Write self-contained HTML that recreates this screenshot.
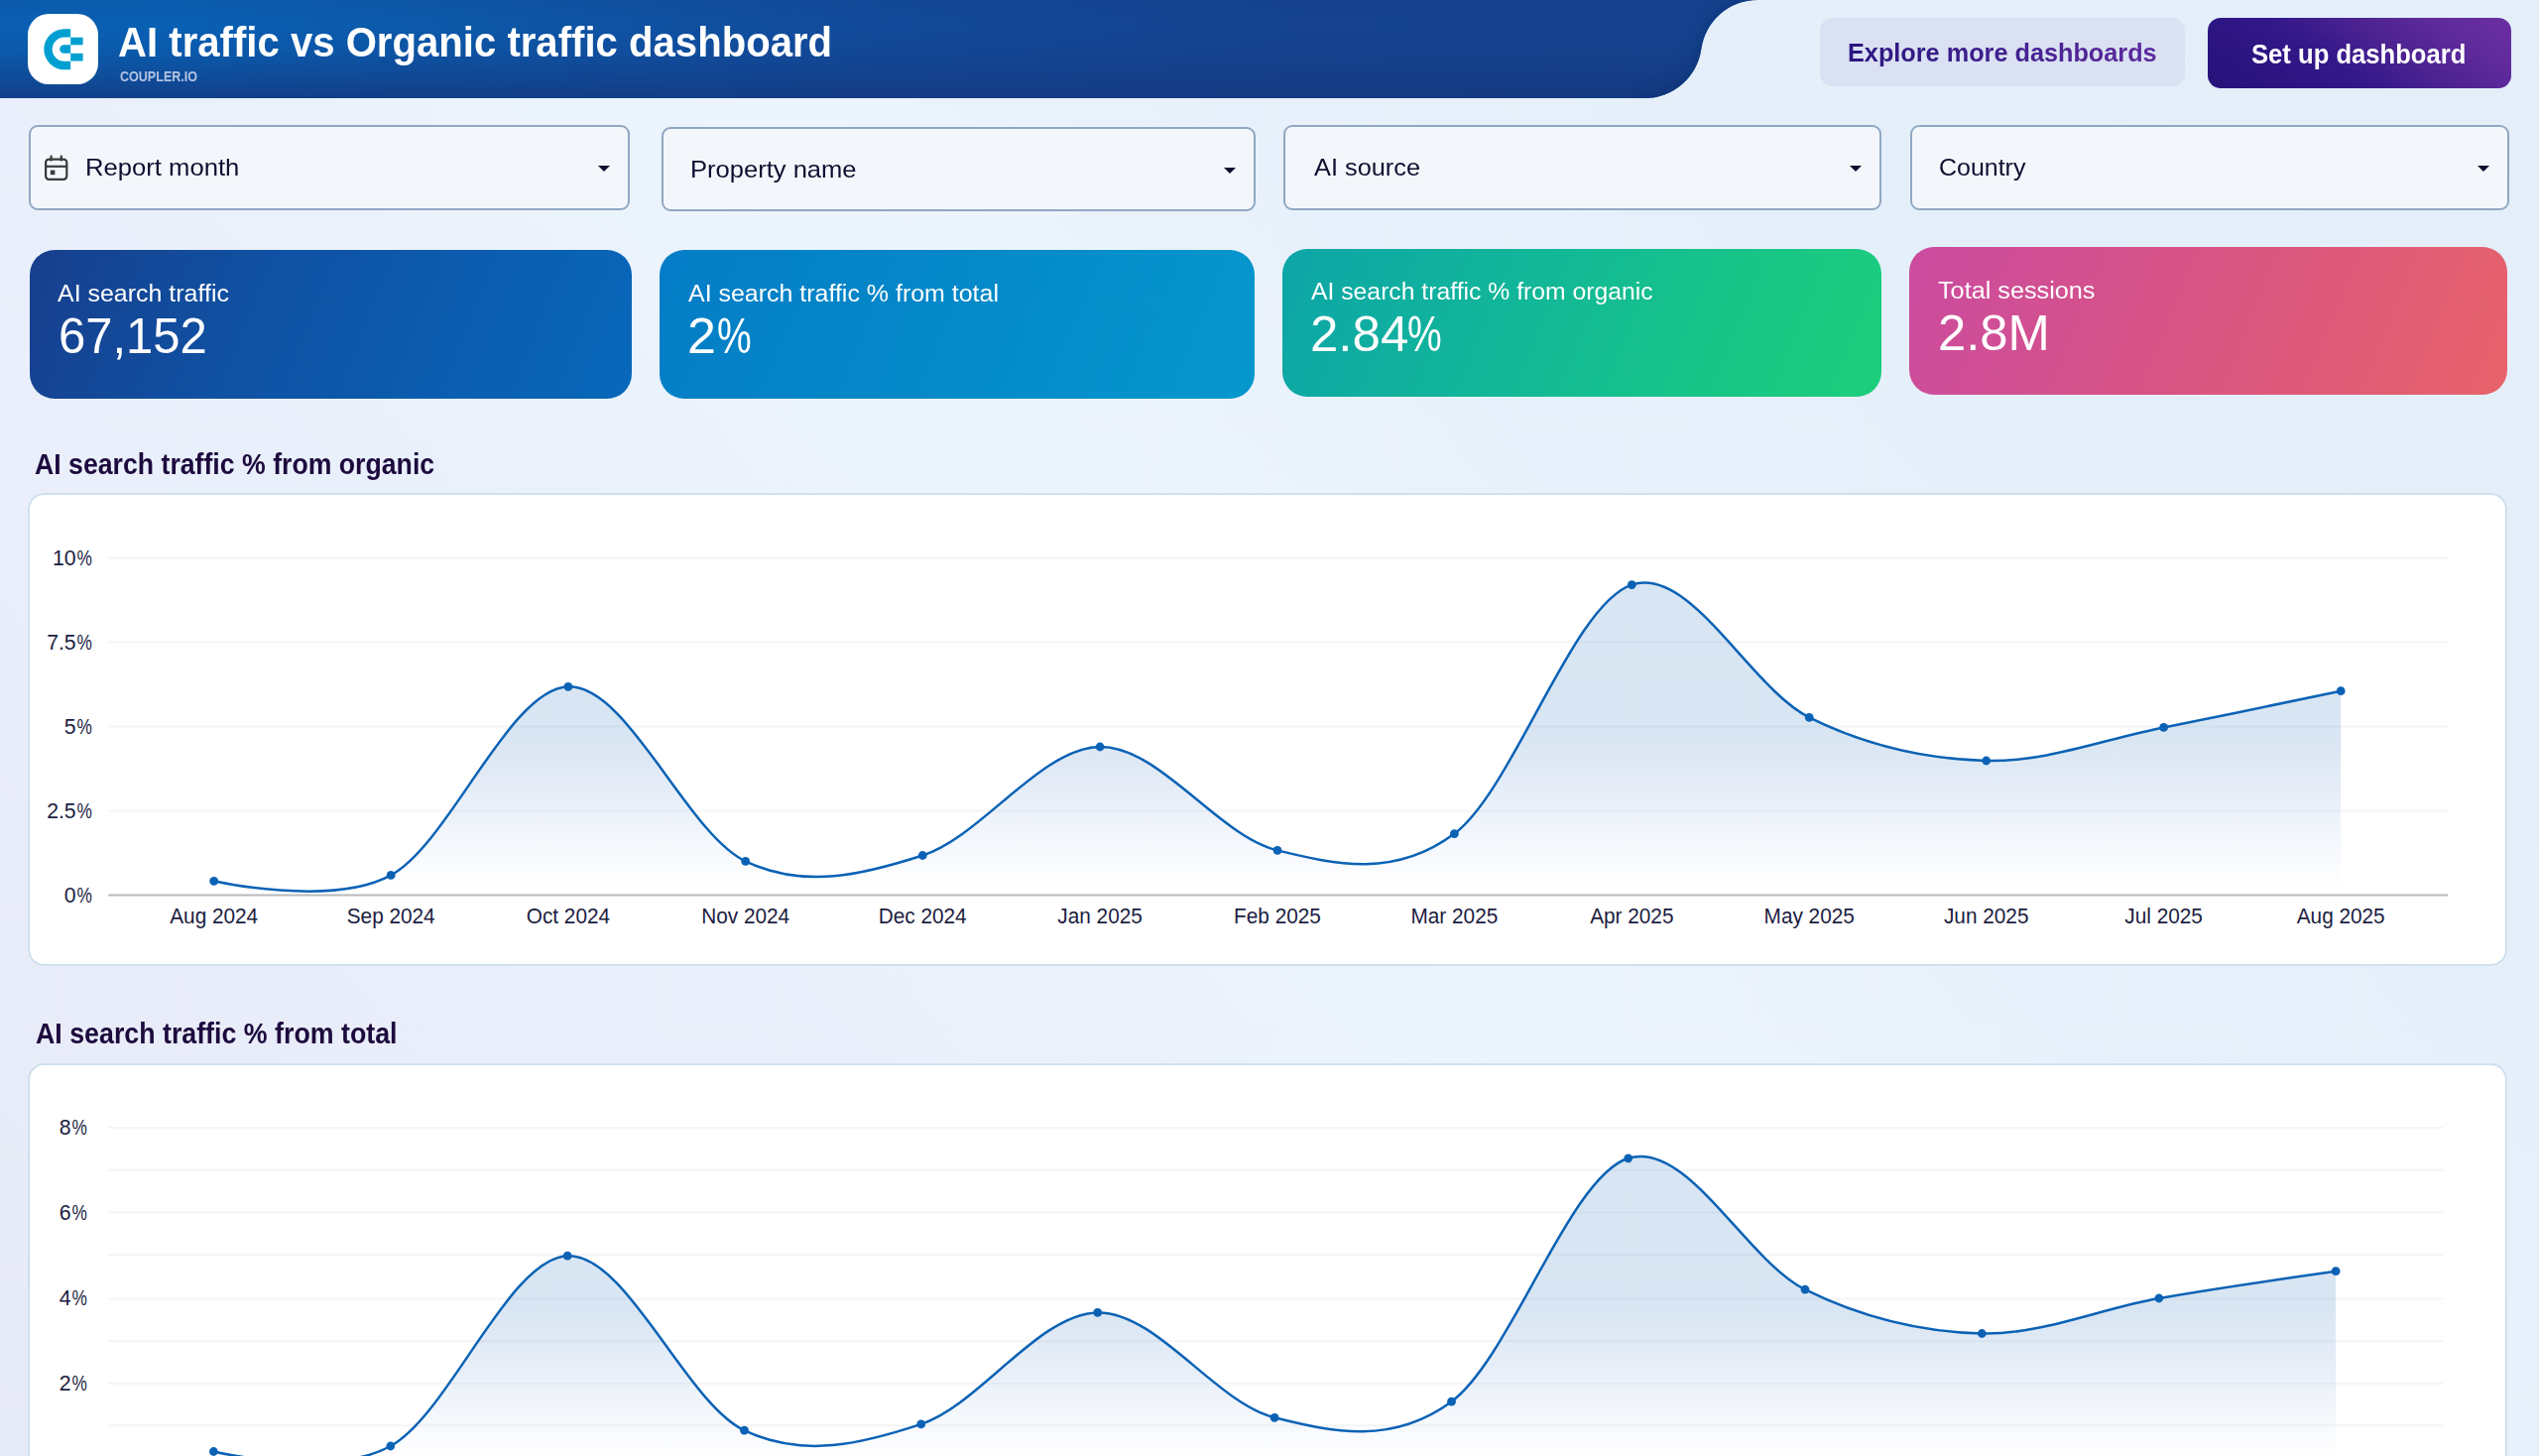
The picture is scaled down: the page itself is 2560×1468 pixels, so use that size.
<!DOCTYPE html>
<html><head><meta charset="utf-8"><title>AI traffic vs Organic traffic dashboard</title>
<style>
html,body{margin:0;padding:0;width:2560px;height:1468px;overflow:hidden}
#page{position:absolute;left:0;top:0;width:2560px;height:1468px;overflow:hidden}
body{width:2560px;height:1468px;overflow:hidden;position:relative;font-family:"Liberation Sans", sans-serif;
background:linear-gradient(48deg,#e7eaf7 0%,#e8ecf8 10%,#e9eefa 22%,#e9f0fb 32%,#ebf3fc 45%,#ecf4fd 52%,#e8f1fb 63%,#e5eff9 78%,#e3eef9 100%);}
.t{position:absolute;white-space:nowrap;line-height:1;font-family:"Liberation Sans", sans-serif;}
.abs{position:absolute}
.filter{position:absolute;box-sizing:border-box;border:2.1px solid #90a7c2;border-radius:9px;background:#f3f7fb;}
.arrow{position:absolute;width:0;height:0;border-left:6.1px solid transparent;border-right:6.1px solid transparent;border-top:6.3px solid #0e0c2c;}
.kpi{position:absolute;border-radius:25px;}
.panel{position:absolute;box-shadow:0 0 0 1.7px #cbdeec;border-radius:14.5px;background:#fff;}
svg text.ax{font-family:"Liberation Sans", sans-serif;font-size:22px;fill:#1c1d42;}
</style></head><body><div id="page">

<!-- header bar -->
<svg class="abs" style="left:0;top:0" width="2560" height="110" viewBox="0 0 2560 110">
<defs>
<linearGradient id="hg" gradientUnits="userSpaceOnUse" x1="0" x2="1775" y1="0" y2="0">
<stop offset="0" stop-color="#0a5fb2"/><stop offset="0.1" stop-color="#0960b4"/><stop offset="0.27" stop-color="#0d57a8"/><stop offset="0.5" stop-color="#124a9a"/><stop offset="0.73" stop-color="#154390"/><stop offset="1" stop-color="#15418d"/>
</linearGradient>
<linearGradient id="hv" gradientUnits="userSpaceOnUse" x1="0" x2="0" y1="0" y2="99">
<stop offset="0" stop-color="#14387f" stop-opacity="0.12"/><stop offset="0.25" stop-color="#14387f" stop-opacity="0"/><stop offset="0.5" stop-color="#14387f" stop-opacity="0.14"/><stop offset="0.78" stop-color="#14387f" stop-opacity="0.48"/><stop offset="1" stop-color="#14387f" stop-opacity="0.82"/>
</linearGradient>
</defs>
<path d="M0,0 H1772.7 A57.6,57.6 0 0 0 1715.4,49.6 A57.6,57.6 0 0 1 1658,99.1 H0 Z" fill="url(#hg)"/>
<path d="M0,0 H1772.7 A57.6,57.6 0 0 0 1715.4,49.6 A57.6,57.6 0 0 1 1658,99.1 H0 Z" fill="url(#hv)"/>
<clipPath id="hclip"><path d="M0,0 H1772.7 A57.6,57.6 0 0 0 1715.4,49.6 A57.6,57.6 0 0 1 1658,99.1 H0 Z"/></clipPath>
<filter id="hblur" x="-10%" y="-50%" width="120%" height="200%"><feGaussianBlur stdDeviation="9"/></filter>
<g clip-path="url(#hclip)"><path d="M1900,-30 H1772.7 V0 A57.6,57.6 0 0 0 1715.4,49.6 A57.6,57.6 0 0 1 1658,99.1 L1640,130 H1900 Z" fill="#0d2a66" opacity="0.5" filter="url(#hblur)"/></g>
</svg>

<!-- logo -->
<div class="abs" style="left:28px;top:14px;width:71px;height:71px;border-radius:21px;background:#fff"></div>
<svg class="abs" style="left:28px;top:14px" width="71" height="71" viewBox="28.4 14 71 71">
<path d="M71.6,29.2 H65.2 A20.5,20.5 0 0 0 65.2,70.2 H71.6 V61.8 H65.2 A12.1,12.1 0 0 1 65.2,37.6 H71.6 Z" fill="#009fd1"/>
<path d="M71.6,45.3 H64.9 A4.25,4.25 0 0 0 64.9,53.8 H71.6 Z" fill="#009fd1"/>
<rect x="71.6" y="37.7" width="12.4" height="7.6" fill="#009fd1"/>
<rect x="71.6" y="53.8" width="12.4" height="7.7" fill="#009fd1"/>
</svg>


<!-- buttons -->
<div class="abs" style="left:1834.5px;top:18px;width:368px;height:69px;border-radius:13px;background:#dae1f2"></div>
<div class="abs" style="left:2225.5px;top:18px;width:306px;height:71px;border-radius:13px;background:linear-gradient(35deg,#27127b 0%,#2d1583 25%,#33188a 40%,#4c2291 60%,#5f2a9c 80%,#6b2fa3 100%)"></div>

<!-- filters -->
<div class="filter" style="left:28.7px;top:126.2px;width:606px;height:85.4px"></div>
<div class="filter" style="left:666.7px;top:128px;width:599.3px;height:85.1px"></div>
<div class="filter" style="left:1294.2px;top:126.2px;width:602.6px;height:85.4px"></div>
<div class="filter" style="left:1925.5px;top:126.2px;width:604.1px;height:85.4px"></div>
<svg class="abs" style="left:44px;top:155px" width="26" height="28" viewBox="44 155 26 28" fill="none" stroke="#3a3a3a" stroke-width="2.2">
<rect x="46.1" y="160.6" width="21.2" height="20.2" rx="3.2"/>
<line x1="46.1" y1="167.8" x2="67.3" y2="167.8"/>
<line x1="51.6" y1="156.6" x2="51.6" y2="162.5"/>
<line x1="61.8" y1="156.6" x2="61.8" y2="162.5"/>
<rect x="50.8" y="171.6" width="4.6" height="4.6" fill="#3a3a3a" stroke="none"/>
</svg>
<div class="arrow" style="left:602.7px;top:167px"></div>
<div class="arrow" style="left:1233.5px;top:168.8px"></div>
<div class="arrow" style="left:1865px;top:167px"></div>
<div class="arrow" style="left:2498.2px;top:167px"></div>

<!-- KPI cards -->
<div class="kpi" style="left:30px;top:252px;width:607px;height:149.5px;background:linear-gradient(112deg,#173f8d 0%,#1050a2 35%,#0b5db0 70%,#0868ba 100%)"></div>
<div class="kpi" style="left:664.5px;top:252px;width:600px;height:149.5px;background:linear-gradient(112deg,#047dc6 0%,#0489c9 50%,#0698cd 100%)"></div>
<div class="kpi" style="left:1292.5px;top:250.5px;width:604.5px;height:149.5px;background:linear-gradient(112deg,#0da5a8 0%,#12b798 40%,#17c488 70%,#1ccf7b 100%)"></div>
<div class="kpi" style="left:1925px;top:248.7px;width:603px;height:149.7px;background:linear-gradient(112deg,#cb4ba0 0%,#d65388 40%,#de5a78 70%,#e8636a 100%)"></div>

<!-- texts -->
<div class="t" id="t_title" style="left:119.47px;top:21.32px;font-size:43px;color:#fff;font-weight:700;transform:scaleX(0.9330);transform-origin:0 0;">AI traffic vs Organic traffic dashboard</div>
<div class="t" id="t_coupler" style="left:121.46px;top:69.70px;font-size:14px;color:#b3c4e2;font-weight:700;transform:scaleX(0.8957);transform-origin:0 0;">COUPLER.IO</div>
<div class="t" id="t_explore" style="left:1862.86px;top:40.31px;font-size:26.7px;color:#3a1f8a;font-weight:700;transform:scaleX(0.9465);transform-origin:0 0;background:linear-gradient(90deg,#2a1780 0%,#3b1d8a 40%,#5e2a9e 100%);-webkit-background-clip:text;background-clip:text;color:transparent;">Explore more dashboards</div>
<div class="t" id="t_setup" style="left:2269.84px;top:40.82px;font-size:27.6px;color:#fff;font-weight:700;transform:scaleX(0.9286);transform-origin:0 0;">Set up dashboard</div>
<div class="t" id="t_f1" style="left:86.46px;top:157.41px;font-size:23.8px;color:#0f0e30;font-weight:400;transform:scaleX(1.0769);transform-origin:0 0;">Report month</div>
<div class="t" id="t_f2" style="left:695.66px;top:159.10px;font-size:23.8px;color:#0f0e30;font-weight:400;transform:scaleX(1.0737);transform-origin:0 0;">Property name</div>
<div class="t" id="t_f3" style="left:1324.61px;top:157.41px;font-size:23.8px;color:#0f0e30;font-weight:400;transform:scaleX(1.0646);transform-origin:0 0;">AI source</div>
<div class="t" id="t_f4" style="left:1954.95px;top:157.41px;font-size:23.8px;color:#0f0e30;font-weight:400;transform:scaleX(1.0489);transform-origin:0 0;">Country</div>
<div class="t" id="t_k1l" style="left:58.40px;top:284.01px;font-size:24.6px;color:#fff;font-weight:400;transform:scaleX(1.0148);transform-origin:0 0;">AI search traffic</div>
<div class="t" id="t_k1v" style="left:59.47px;top:314.31px;font-size:50.3px;color:#fff;font-weight:400;transform:scaleX(0.9742);transform-origin:0 0;">67,152</div>
<div class="t" id="t_k2l" style="left:693.60px;top:284.01px;font-size:24.6px;color:#fff;font-weight:400;transform:scaleX(1.0146);transform-origin:0 0;">AI search traffic % from total</div>
<div class="t" id="t_k2v" style="left:693.40px;top:314.01px;font-size:50.3px;color:#fff;font-weight:400;transform:scaleX(1.0344);transform-origin:0 0;">2</div>
<div class="t" id="t_k2p" style="left:722.80px;top:314.01px;font-size:50.3px;color:#fff;font-weight:400;transform:scaleX(0.7765);transform-origin:0 0;">%</div>
<div class="t" id="t_k3l" style="left:1321.60px;top:282.40px;font-size:24.6px;color:#fff;font-weight:400;transform:scaleX(1.0058);transform-origin:0 0;">AI search traffic % from organic</div>
<div class="t" id="t_k3v" style="left:1321.30px;top:312.20px;font-size:50.3px;color:#fff;font-weight:400;transform:scaleX(1.0137);transform-origin:0 0;">2.84</div>
<div class="t" id="t_k3p" style="left:1419.10px;top:312.20px;font-size:50.3px;color:#fff;font-weight:400;transform:scaleX(0.7765);transform-origin:0 0;">%</div>
<div class="t" id="t_k4l" style="left:1954.40px;top:280.51px;font-size:24.6px;color:#fff;font-weight:400;transform:scaleX(1.0260);transform-origin:0 0;">Total sessions</div>
<div class="t" id="t_k4v" style="left:1954.38px;top:310.91px;font-size:50.3px;color:#fff;font-weight:400;transform:scaleX(1.0099);transform-origin:0 0;">2.8M</div>
<div class="t" id="t_s1" style="left:35.42px;top:453.80px;font-size:28.8px;color:#1d0a3d;font-weight:700;transform:scaleX(0.9262);transform-origin:0 0;">AI search traffic % from organic</div>
<div class="t" id="t_s2" style="left:36.00px;top:1028.22px;font-size:28.8px;color:#1d0a3d;font-weight:700;transform:scaleX(0.9297);transform-origin:0 0;">AI search traffic % from total</div>

<!-- panels -->
<div class="panel" style="left:30.1px;top:499.4px;width:2495.8px;height:472.9px"></div>
<div class="panel" style="left:30.1px;top:1074px;width:2495.8px;height:472.9px"></div>

<svg class="abs" style="left:0;top:0" width="2560" height="1468" viewBox="0 0 2560 1468">
<line x1="109.3" x2="2468.3" y1="562.6" y2="562.6" stroke="#f5f5f7" stroke-width="2"/>
<line x1="109.3" x2="2468.3" y1="647.6" y2="647.6" stroke="#f5f5f7" stroke-width="2"/>
<line x1="109.3" x2="2468.3" y1="732.5" y2="732.5" stroke="#f5f5f7" stroke-width="2"/>
<line x1="109.3" x2="2468.3" y1="817.5" y2="817.5" stroke="#f5f5f7" stroke-width="2"/>
<defs><linearGradient id="ga" gradientUnits="userSpaceOnUse" x1="0" x2="0" y1="587" y2="896"><stop offset="0" stop-color="#0b5cb0" stop-opacity="0.16"/><stop offset="0.5" stop-color="#0b5cb0" stop-opacity="0.158"/><stop offset="0.66" stop-color="#1a5fba" stop-opacity="0.118"/><stop offset="0.82" stop-color="#2a66c2" stop-opacity="0.062"/><stop offset="1" stop-color="#2a66c2" stop-opacity="0.0"/></linearGradient></defs>
<path d="M215.70,888.30 C215.70,888.30 334.67,915.07 394.20,882.40 C453.73,849.73 513.32,694.63 572.90,692.30 C632.48,689.97 692.15,840.03 751.70,868.40 C811.25,896.77 870.63,881.73 930.20,862.50 C989.77,843.27 1049.47,753.85 1109.10,753.00 C1168.73,752.15 1228.45,842.80 1288.00,857.40 C1347.55,872.00 1406.85,885.23 1466.40,840.60 C1525.95,795.97 1585.67,609.15 1645.30,589.60 C1704.93,570.05 1764.63,693.73 1824.20,723.30 C1883.77,752.87 1943.13,765.32 2002.70,767.00 C2062.27,768.68 2122.02,745.12 2181.60,733.40 C2241.18,721.68 2360.20,696.70 2360.20,696.70 L2360.20,902.45 L215.70,902.45 Z" fill="url(#ga)"/>
<line x1="109.3" x2="2468.3" y1="902.45" y2="902.45" stroke="#b9b9b9" stroke-width="2"/>
<path d="M215.70,888.30 C215.70,888.30 334.67,915.07 394.20,882.40 C453.73,849.73 513.32,694.63 572.90,692.30 C632.48,689.97 692.15,840.03 751.70,868.40 C811.25,896.77 870.63,881.73 930.20,862.50 C989.77,843.27 1049.47,753.85 1109.10,753.00 C1168.73,752.15 1228.45,842.80 1288.00,857.40 C1347.55,872.00 1406.85,885.23 1466.40,840.60 C1525.95,795.97 1585.67,609.15 1645.30,589.60 C1704.93,570.05 1764.63,693.73 1824.20,723.30 C1883.77,752.87 1943.13,765.32 2002.70,767.00 C2062.27,768.68 2122.02,745.12 2181.60,733.40 C2241.18,721.68 2360.20,696.70 2360.20,696.70" fill="none" stroke="#0b62b5" stroke-width="2.5" stroke-linejoin="round" stroke-linecap="round"/>
<circle cx="215.7" cy="888.3" r="4.4" fill="#0b62b5"/>
<circle cx="394.2" cy="882.4" r="4.4" fill="#0b62b5"/>
<circle cx="572.9" cy="692.3" r="4.4" fill="#0b62b5"/>
<circle cx="751.7" cy="868.4" r="4.4" fill="#0b62b5"/>
<circle cx="930.2" cy="862.5" r="4.4" fill="#0b62b5"/>
<circle cx="1109.1" cy="753.0" r="4.4" fill="#0b62b5"/>
<circle cx="1288.0" cy="857.4" r="4.4" fill="#0b62b5"/>
<circle cx="1466.4" cy="840.6" r="4.4" fill="#0b62b5"/>
<circle cx="1645.3" cy="589.6" r="4.4" fill="#0b62b5"/>
<circle cx="1824.2" cy="723.3" r="4.4" fill="#0b62b5"/>
<circle cx="2002.7" cy="767.0" r="4.4" fill="#0b62b5"/>
<circle cx="2181.6" cy="733.4" r="4.4" fill="#0b62b5"/>
<circle cx="2360.2" cy="696.7" r="4.4" fill="#0b62b5"/>
<text transform="translate(92.89999999999999,569.8) scale(0.77,1)" text-anchor="end" class="ax" style="font-size:22.4px">%</text>
<text transform="translate(76.69999999999999,569.8) scale(0.95,1)" text-anchor="end" class="ax" style="font-size:22.4px">10</text>
<text transform="translate(92.89999999999999,654.8) scale(0.77,1)" text-anchor="end" class="ax" style="font-size:22.4px">%</text>
<text transform="translate(76.69999999999999,654.8) scale(0.95,1)" text-anchor="end" class="ax" style="font-size:22.4px">7.5</text>
<text transform="translate(92.89999999999999,739.7) scale(0.77,1)" text-anchor="end" class="ax" style="font-size:22.4px">%</text>
<text transform="translate(76.69999999999999,739.7) scale(0.95,1)" text-anchor="end" class="ax" style="font-size:22.4px">5</text>
<text transform="translate(92.89999999999999,824.7) scale(0.77,1)" text-anchor="end" class="ax" style="font-size:22.4px">%</text>
<text transform="translate(76.69999999999999,824.7) scale(0.95,1)" text-anchor="end" class="ax" style="font-size:22.4px">2.5</text>
<text transform="translate(92.89999999999999,909.6) scale(0.77,1)" text-anchor="end" class="ax" style="font-size:22.4px">%</text>
<text transform="translate(76.69999999999999,909.6) scale(0.95,1)" text-anchor="end" class="ax" style="font-size:22.4px">0</text>
<text transform="translate(215.7,930.9) scale(0.945,1)" text-anchor="middle" class="ax">Aug 2024</text>
<text transform="translate(394.2,930.9) scale(0.945,1)" text-anchor="middle" class="ax">Sep 2024</text>
<text transform="translate(572.9,930.9) scale(0.945,1)" text-anchor="middle" class="ax">Oct 2024</text>
<text transform="translate(751.7,930.9) scale(0.945,1)" text-anchor="middle" class="ax">Nov 2024</text>
<text transform="translate(930.2,930.9) scale(0.945,1)" text-anchor="middle" class="ax">Dec 2024</text>
<text transform="translate(1109.1,930.9) scale(0.945,1)" text-anchor="middle" class="ax">Jan 2025</text>
<text transform="translate(1288.0,930.9) scale(0.945,1)" text-anchor="middle" class="ax">Feb 2025</text>
<text transform="translate(1466.4,930.9) scale(0.945,1)" text-anchor="middle" class="ax">Mar 2025</text>
<text transform="translate(1645.3,930.9) scale(0.945,1)" text-anchor="middle" class="ax">Apr 2025</text>
<text transform="translate(1824.2,930.9) scale(0.945,1)" text-anchor="middle" class="ax">May 2025</text>
<text transform="translate(2002.7,930.9) scale(0.945,1)" text-anchor="middle" class="ax">Jun 2025</text>
<text transform="translate(2181.6,930.9) scale(0.945,1)" text-anchor="middle" class="ax">Jul 2025</text>
<text transform="translate(2360.2,930.9) scale(0.945,1)" text-anchor="middle" class="ax">Aug 2025</text>
<line x1="109.3" x2="2463.3" y1="1136.9" y2="1136.9" stroke="#f5f5f7" stroke-width="2"/>
<line x1="109.3" x2="2463.3" y1="1179.7" y2="1179.7" stroke="#f5f5f7" stroke-width="2"/>
<line x1="109.3" x2="2463.3" y1="1222.5" y2="1222.5" stroke="#f5f5f7" stroke-width="2"/>
<line x1="109.3" x2="2463.3" y1="1265.3" y2="1265.3" stroke="#f5f5f7" stroke-width="2"/>
<line x1="109.3" x2="2463.3" y1="1309.4" y2="1309.4" stroke="#f5f5f7" stroke-width="2"/>
<line x1="109.3" x2="2463.3" y1="1352.3" y2="1352.3" stroke="#f5f5f7" stroke-width="2"/>
<line x1="109.3" x2="2463.3" y1="1394.7" y2="1394.7" stroke="#f5f5f7" stroke-width="2"/>
<line x1="109.3" x2="2463.3" y1="1437.3" y2="1437.3" stroke="#f5f5f7" stroke-width="2"/>
<defs><linearGradient id="gb" gradientUnits="userSpaceOnUse" x1="0" x2="0" y1="1165" y2="1472"><stop offset="0" stop-color="#0b5cb0" stop-opacity="0.16"/><stop offset="0.5" stop-color="#0b5cb0" stop-opacity="0.158"/><stop offset="0.66" stop-color="#1a5fba" stop-opacity="0.118"/><stop offset="0.82" stop-color="#2a66c2" stop-opacity="0.062"/><stop offset="1" stop-color="#2a66c2" stop-opacity="0.0"/></linearGradient></defs>
<path d="M215.40,1463.50 C215.40,1463.50 334.33,1490.88 393.80,1458.00 C453.27,1425.12 512.75,1268.83 572.20,1266.20 C631.65,1263.57 691.08,1413.92 750.50,1442.20 C809.92,1470.48 869.33,1455.70 928.70,1435.90 C988.07,1416.10 1047.30,1324.50 1106.70,1323.40 C1166.10,1322.30 1225.63,1414.33 1285.10,1429.30 C1344.57,1444.27 1404.07,1456.78 1463.50,1413.20 C1522.93,1369.62 1582.28,1186.65 1641.70,1167.80 C1701.12,1148.95 1760.57,1270.65 1820.00,1300.10 C1879.43,1329.55 1938.83,1343.02 1998.30,1344.50 C2057.77,1345.98 2117.33,1319.47 2176.80,1309.00 C2236.27,1298.53 2355.10,1281.70 2355.10,1281.70 L2355.10,1480.5 L215.40,1480.5 Z" fill="url(#gb)"/>
<path d="M215.40,1463.50 C215.40,1463.50 334.33,1490.88 393.80,1458.00 C453.27,1425.12 512.75,1268.83 572.20,1266.20 C631.65,1263.57 691.08,1413.92 750.50,1442.20 C809.92,1470.48 869.33,1455.70 928.70,1435.90 C988.07,1416.10 1047.30,1324.50 1106.70,1323.40 C1166.10,1322.30 1225.63,1414.33 1285.10,1429.30 C1344.57,1444.27 1404.07,1456.78 1463.50,1413.20 C1522.93,1369.62 1582.28,1186.65 1641.70,1167.80 C1701.12,1148.95 1760.57,1270.65 1820.00,1300.10 C1879.43,1329.55 1938.83,1343.02 1998.30,1344.50 C2057.77,1345.98 2117.33,1319.47 2176.80,1309.00 C2236.27,1298.53 2355.10,1281.70 2355.10,1281.70" fill="none" stroke="#0b62b5" stroke-width="2.5" stroke-linejoin="round" stroke-linecap="round"/>
<circle cx="215.4" cy="1463.5" r="4.4" fill="#0b62b5"/>
<circle cx="393.8" cy="1458.0" r="4.4" fill="#0b62b5"/>
<circle cx="572.2" cy="1266.2" r="4.4" fill="#0b62b5"/>
<circle cx="750.5" cy="1442.2" r="4.4" fill="#0b62b5"/>
<circle cx="928.7" cy="1435.9" r="4.4" fill="#0b62b5"/>
<circle cx="1106.7" cy="1323.4" r="4.4" fill="#0b62b5"/>
<circle cx="1285.1" cy="1429.3" r="4.4" fill="#0b62b5"/>
<circle cx="1463.5" cy="1413.2" r="4.4" fill="#0b62b5"/>
<circle cx="1641.7" cy="1167.8" r="4.4" fill="#0b62b5"/>
<circle cx="1820.0" cy="1300.1" r="4.4" fill="#0b62b5"/>
<circle cx="1998.3" cy="1344.5" r="4.4" fill="#0b62b5"/>
<circle cx="2176.8" cy="1309.0" r="4.4" fill="#0b62b5"/>
<circle cx="2355.1" cy="1281.7" r="4.4" fill="#0b62b5"/>
<text transform="translate(87.8,1144.3) scale(0.77,1)" text-anchor="end" class="ax" style="font-size:22.4px">%</text>
<text transform="translate(71.6,1144.3) scale(0.95,1)" text-anchor="end" class="ax" style="font-size:22.4px">8</text>
<text transform="translate(87.8,1229.8) scale(0.77,1)" text-anchor="end" class="ax" style="font-size:22.4px">%</text>
<text transform="translate(71.6,1229.8) scale(0.95,1)" text-anchor="end" class="ax" style="font-size:22.4px">6</text>
<text transform="translate(87.8,1316.3) scale(0.77,1)" text-anchor="end" class="ax" style="font-size:22.4px">%</text>
<text transform="translate(71.6,1316.3) scale(0.95,1)" text-anchor="end" class="ax" style="font-size:22.4px">4</text>
<text transform="translate(87.8,1402.0) scale(0.77,1)" text-anchor="end" class="ax" style="font-size:22.4px">%</text>
<text transform="translate(71.6,1402.0) scale(0.95,1)" text-anchor="end" class="ax" style="font-size:22.4px">2</text>
</svg>
</div></body></html>
